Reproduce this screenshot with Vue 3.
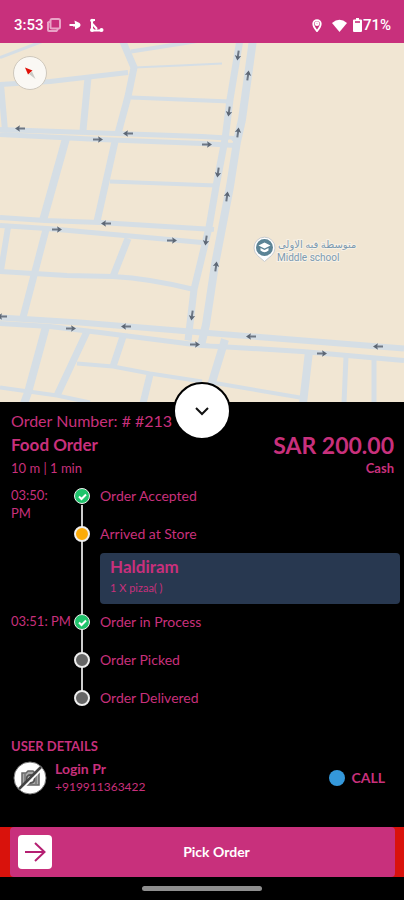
<script setup>
import { ref } from 'vue'

const open = ref(true)

const roads = [
  { w: 3, d: 'M0 58L42 42' },
  { w: 5, d: 'M0 85L50 82L128 73' },
  { w: 7, d: 'M122 40L134 68L128 97L118 134M115 142L97 222' },
  { w: 4, d: 'M131 52L182 44L200 41' },
  { w: 2, d: 'M134 68L180 66L222 64' },
  { w: 4, d: 'M131 98L230 102M110 182L216 186' },
  { w: 7, d: 'M88 78L83 131' },
  { w: 6, d: 'M1 85L5 131M8 228L1 271' },
  { w: 8, d: 'M66 139L43 221' },
  { w: 7, d: 'M46 230L35 272L23 318M128 239L113 277' },
  { w: 5, d: 'M0 272L67 276L113 277Q150 279 194 290' },
  { w: 8, d: 'M46 327L28 393' },
  { w: 7, d: 'M87 332L57 396M123 337L113 367M150 375L143 404' },
  { w: 4, d: 'M77 364L113 367L150 374L202 382M212 383L300 398M0 388L57 396L90 403' },
  { w: 8, d: 'M225 340L211 386M309 352L303 404M28 393L24 404' },
  { w: 5, d: 'M346 357L344 404M374 359L374 404' },
  { w: 5, d: 'M0 130L202 137L234 139M0 135L100 140L202 144L236 146' },
  { w: 5, d: 'M0 218L45 221L100 223L214 230M0 226L47 229L202 243' },
  { w: 6, d: 'M0 318L80 323L202 333L404 349' },
  { w: 5, d: 'M0 324L50 327L100 333L202 346L302 352L404 361' },
  { w: 7, d: 'M240 40L230 100L225 140L216 187L209 228L194 290L188 341' },
  { w: 8, d: 'M253 40L242 120L237 142L230 187L215 265L206 325L201 346' },
]

const arrows = [
  [20, 129, 180], [98, 140, 0], [128, 134, 180], [207, 145, 0],
  [238, 56, 98], [248, 76, -82], [229, 112, 98], [238, 133, -82],
  [218, 173, 98], [227, 197, -82], [206, 241, 98], [216, 267, -82],
  [106, 224, 180], [57, 230, 0], [172, 241, 0], [192, 316, 98],
  [2, 317, 180], [71, 329, 0], [126, 327, 180], [195, 345, 0],
  [251, 337, 180], [378, 347, 180], [322, 354, 0],
]

const steps = [
  { time: ['03:50:', 'PM'], label: 'Order Accepted', state: 'done' },
  {
    time: [], label: 'Arrived at Store', state: 'current',
    store: { name: 'Haldiram', items: '1 X pizaa( )' },
  },
  { time: ['03:51: PM'], label: 'Order in Process', state: 'done' },
  { time: [], label: 'Order Picked', state: 'pending' },
  { time: [], label: 'Order Delivered', state: 'pending' },
]
</script>

<template>
  <div class="screen">
    <header class="status">
      <div class="group">
        <span>3:53</span>
        <svg class="ghost" width="14" height="14" viewBox="0 0 14 14">
          <rect x="3.500" y="1" width="9.500" height="9.500" rx="1.500" />
          <path d="M3 3.500L1 4.500V12Q1 13 2 13H9.500L11 11" />
        </svg>
        <svg class="sign" width="12" height="10" viewBox="0 0 12 10">
          <path d="M0.500 5H5" />
          <path class="solid" d="M5.500 0.500L10.500 3Q12.500 5 10.500 7L6 9.500V6.500H4V4H6Z" />
        </svg>
        <svg class="route" width="15" height="15" viewBox="0 0 15 15">
          <path d="M3 12V2M3 2H6M3.500 6L8 11M3 12.500H12" />
          <circle cx="3" cy="2.500" r="1.800" />
          <circle cx="3" cy="12" r="2" />
          <circle cx="12.500" cy="12" r="2" />
        </svg>
      </div>
      <div class="group right">
        <svg class="pin" width="10" height="13" viewBox="0 0 10 14">
          <path d="M5 13Q1 8.500 1 5.200A4 4 0 0 1 9 5.200Q9 8.500 5 13Z" />
          <circle cx="5" cy="5" r="1.500" />
        </svg>
        <svg class="wifi" width="15" height="13" viewBox="0 0 15 13">
          <path d="M0 4Q7.500 -2.500 15 4L7.500 13Z" />
        </svg>
        <div class="battery">
          <svg width="9" height="14" viewBox="0 0 9 14">
            <path fill="#fff" d="M3 0H6V1.500H8Q9 1.500 9 2.500V13Q9 14 8 14H1Q0 14 0 13V2.500Q0 1.500 1 1.500H3Z" />
            <path fill="#c8307c" d="M2 3.200H7V4.800H2Z" />
          </svg>
          <span>71%</span>
        </div>
      </div>
    </header>

    <section class="map" aria-label="Map">
      <svg class="streets" viewBox="0 43 404 360" preserveAspectRatio="xMidYMid slice">
        <path v-for="r in roads" :key="r.d" :d="r.d" :stroke-width="r.w" class="road" />
        <g class="gaps">
          <rect x="228" y="140" width="4" height="3" rx="1" />
          <rect x="212" y="232" width="4" height="8" rx="2" />
          <rect x="208" y="338" width="12" height="6" rx="2" />
        </g>
        <g v-for="(a, i) in arrows" :key="i" :transform="`translate(${a[0]} ${a[1]}) rotate(${a[2]})`">
          <path class="arrow" d="M-5 0H3" />
          <path class="head" d="M5 0L0 -3.200L1 0L0 3.200Z" />
        </g>
        <path d="M264.500 262L257.500 256A10.500 10.500 0 1 1 271.500 256Z" fill="#fff" stroke="#c9ccd0" />
        <circle cx="264.500" cy="248" r="8.500" fill="#5c8496" />
        <path d="M258.500 246L264.500 243L270.500 246L264.500 249ZM260.500 248.500V251Q264.500 254.500 268.500 251V248.500L264.500 250.500Z" fill="#fff" />
        <text class="place" x="278" y="248">متوسطة فيه الاولى</text>
        <text class="place latin" x="277" y="261">Middle school</text>
      </svg>
      <button class="compass" aria-label="Reset north">
        <svg width="16" height="16" viewBox="0 0 16 16">
          <path d="M3 2.500L10.500 5.500L6 9.500Z" fill="#e01008" />
          <path d="M10 6.500L13.500 14L7 9Z" fill="#c9c9c4" />
        </svg>
      </button>
    </section>

    <main class="sheet">
      <button class="toggle" aria-label="Toggle order details" :aria-expanded="open" @click="open = !open">
        <svg width="18" height="18" viewBox="0 0 18 18">
          <path d="M3 6L9 12L15 6" />
        </svg>
      </button>

      <div class="summary">
        <p class="number">Order Number: # #213</p>
        <div class="line">
          <h1>Food Order</h1>
          <strong class="price">SAR 200.00</strong>
        </div>
        <div class="line meta">
          <span>10 m | 1 min</span>
          <span class="cash">Cash</span>
        </div>
      </div>

      <ol class="timeline">
        <li v-for="s in steps" :key="s.label">
          <div class="time"><span v-for="t in s.time" :key="t">{{ t }}</span></div>
          <div class="rail">
            <span class="dot" :class="s.state">
              <svg v-if="s.state === 'done'" width="11" height="11" viewBox="0 0 11 11">
                <path d="M2 5.500L4.500 8L9 3.500" />
              </svg>
            </span>
          </div>
          <div class="body">
            <span>{{ s.label }}</span>
            <div v-if="s.store" class="store">
              <h2>{{ s.store.name }}</h2>
              <p>{{ s.store.items }}</p>
            </div>
          </div>
        </li>
      </ol>

      <section class="user">
        <h3>USER DETAILS</h3>
        <div class="contact">
          <svg class="avatar" width="34" height="34" viewBox="0 0 34 34">
            <circle cx="17" cy="17" r="16" fill="#fff" stroke="#777" />
            <path d="M9 12H13L15 10H20L22 12H26V24H9Z" fill="#aaa" stroke="#666" stroke-width="1.500" />
            <circle cx="17.500" cy="18" r="4" fill="#eee" stroke="#555" stroke-width="2" />
            <path d="M12 13V23M23 13V23" stroke="#777" stroke-width="1.500" />
            <path d="M8 29L29 8" stroke="#fff" stroke-width="2" />
            <path d="M6 28L28 6" stroke="#444" stroke-width="2.500" />
          </svg>
          <div class="who">
            <strong>Login Pr</strong>
            <span class="phone">+919911363422</span>
          </div>
          <a class="call" href="tel:+919911363422"><i></i>CALL</a>
        </div>
      </section>
    </main>

    <footer>
      <div class="action">
        <button class="pick">
          <span class="thumb">
            <svg width="24" height="24" viewBox="0 0 24 24">
              <path d="M2 12H21M12 3L21.500 12L12 21" />
            </svg>
          </span>
          <span class="caption">Pick Order</span>
        </button>
      </div>
      <div class="home"></div>
    </footer>
  </div>
</template>

<style>
body {
  background: #000;
}
</style>

<style scoped>
* {
  box-sizing: border-box;
}
.screen {
  display: flex;
  flex-direction: column;
  min-height: 100vh;
  background: #000;
  color: #c8307c;
  font: 14px/20px Lato, "Open Sans", sans-serif;
}
h1, h2, h3, p, ol {
  margin: 0;
  padding: 0;
}
button {
  border: 0;
  padding: 0;
  font: inherit;
  cursor: pointer;
}
.status {
  display: flex;
  justify-content: space-between;
  align-items: flex-end;
  height: 43px;
  padding: 0 13px 8px 14px;
  background: #c8307c;
  color: #fff;
  font: 500 15px/20px Roboto, sans-serif;
}
.group {
  display: flex;
  align-items: center;
  gap: 8px;
}
.group > span {
  margin-right: -5px;
}
.group svg {
  fill: none;
  stroke: #fff;
  stroke-width: 2;
}
.group .ghost {
  stroke: #e9a3c6;
}
.group .pin {
  margin-right: 2px;
}
.group .solid,
.group .route circle,
.group .wifi {
  fill: #fff;
  stroke: none;
}
.battery {
  display: flex;
  align-items: center;
  gap: 1px;
  margin-left: -2px;
}
.group .battery svg {
  stroke: none;
}
.map {
  position: relative;
  flex: 1 1 200px;
  min-height: 200px;
  background: #f1e6d3;
}
.streets {
  position: absolute;
  width: 100%;
  height: 100%;
}
.road {
  fill: none;
  stroke: #d5dee5;
  stroke-linejoin: round;
}
.gaps {
  fill: #f1e6d3;
}
.arrow {
  stroke: #6d7784;
  stroke-width: 2;
}
.head {
  fill: #5d6775;
}
.place {
  fill: #7d9bb2;
  stroke: #f7f1e6;
  stroke-width: 2;
  paint-order: stroke;
  font: 10px Roboto, "DejaVu Sans", sans-serif;
}
.compass {
  position: absolute;
  left: 13px;
  top: 13px;
  display: grid;
  place-items: center;
  width: 34px;
  height: 34px;
  border: 1px solid #cfc8bc;
  border-radius: 50%;
  background: #faf8f4;
}
.sheet {
  position: relative;
  padding: 7px 4px 31px 11px;
}
.toggle {
  position: absolute;
  left: 50%;
  top: -20px;
  display: grid;
  place-items: center;
  width: 58px;
  height: 58px;
  border: 2px solid #000;
  border-radius: 50%;
  background: #fff;
  transform: translateX(-50%);
}
.toggle path {
  fill: none;
  stroke: #111;
  stroke-width: 2;
}
.summary {
  padding-right: 6px;
}
.number {
  font-size: 16px;
  line-height: 24px;
}
.line {
  display: flex;
  justify-content: space-between;
  align-items: center;
  height: 24px;
}
h1 {
  font-size: 17px;
}
.price {
  font-size: 23px;
}
.meta {
  height: 22px;
  font-size: 13px;
}
.cash {
  font-weight: 700;
}
.timeline {
  margin-top: 7px;
  list-style: none;
}
li {
  display: grid;
  grid-template-columns: 58px 15px 1fr;
  min-height: 38px;
}
li:last-child {
  min-height: 20px;
}
.time {
  display: flex;
  flex-direction: column;
  font-size: 13px;
  line-height: 18px;
  white-space: nowrap;
}
.rail {
  margin-left: 5px;
  width: 16px;
  padding-top: 2px;
  background: linear-gradient(#ccc, #ccc) 50% 100% / 2px 100% no-repeat;
}
li:first-child .rail {
  background-size: 2px 50%;
}
li:last-child .rail {
  background-position: 50% 0;
  background-size: 2px 8px;
}
.dot {
  display: grid;
  place-items: center;
  width: 16px;
  height: 16px;
  border: 2px solid #eee;
  border-radius: 50%;
}
.dot.done {
  border-width: 1px;
  background: #1fc36b;
}
.dot.current {
  background: #fbab09;
}
.dot.pending {
  background: #666;
}
.dot path {
  fill: none;
  stroke: #fff;
  stroke-width: 2;
}
.body {
  padding-left: 16px;
}
.store {
  margin: 9px 0 8px;
  padding: 3px 10px 6px;
  border-radius: 4px;
  background: #283850;
}
h2 {
  font-size: 17px;
  line-height: 22px;
}
.store p {
  font-size: 11px;
  line-height: 20px;
}
.user {
  margin-top: 28px;
}
h3 {
  font-size: 13px;
}
.contact {
  display: flex;
  align-items: center;
  margin-top: 4px;
  padding: 0 15px 0 2px;
}
.who {
  display: flex;
  flex: 1;
  flex-direction: column;
  margin-left: 8px;
  line-height: 18px;
}
.phone {
  font-size: 12px;
}
.call {
  display: flex;
  align-items: center;
  gap: 6px;
  color: inherit;
  font-weight: 700;
  text-decoration: none;
}
.call i {
  width: 16px;
  height: 16px;
  border-radius: 50%;
  background: #3498db;
}
.action {
  padding: 0 9px 0 10px;
  background: #d9120c;
}
.pick {
  display: flex;
  align-items: center;
  width: 100%;
  height: 50px;
  padding: 0 8px;
  border-radius: 4px;
  background: #c8307c;
  color: #fff;
  font-weight: 700;
}
.thumb {
  display: grid;
  place-items: center;
  width: 34px;
  height: 34px;
  border-radius: 4px;
  background: #fff;
}
.thumb path {
  fill: none;
  stroke: #b51f72;
  stroke-width: 2;
}
.caption {
  flex: 1;
  padding-right: 6px;
}
.home {
  width: 120px;
  height: 5px;
  margin: 9px auto;
  border-radius: 3px;
  background: #8e8e8e;
}
</style>
